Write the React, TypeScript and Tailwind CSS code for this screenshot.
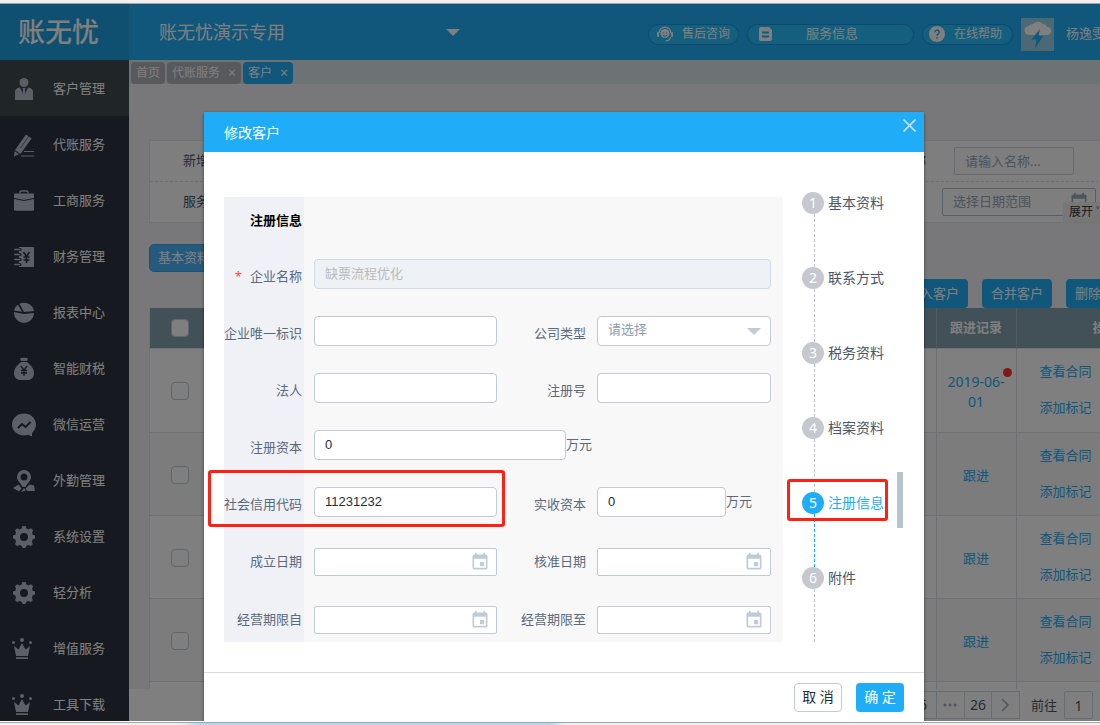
import { useState } from 'react'
import type { ReactNode } from 'react'
import clsx from 'clsx'
import { MdEvent } from 'react-icons/md'

const menuItems = [
  { label: '客户管理', icon: 'person' },
  { label: '代账服务', icon: 'pencil' },
  { label: '工商服务', icon: 'briefcase' },
  { label: '财务管理', icon: 'ledger' },
  { label: '报表中心', icon: 'pie' },
  { label: '智能财税', icon: 'moneybag' },
  { label: '微信运营', icon: 'trend' },
  { label: '外勤管理', icon: 'pin' },
  { label: '系统设置', icon: 'gear' },
  { label: '轻分析', icon: 'gear' },
  { label: '增值服务', icon: 'crown' },
  { label: '工具下载', icon: 'crown' },
]

const steps = ['基本资料', '联系方式', '税务资料', '档案资料', '注册信息', '附件']

const menuIcons: Record<string, ReactNode> = {
  person: (
    <>
      <circle cx="12" cy="5.5" r="4.5" />
      <path d="M3 23v-8c0-3 2-4 5-4.5L12 20l4-9.500c3 .5 5 1.500 5 4.500v8z" />
      <path d="M10.500 11h3l-.6 2 1.100 5-2 3-2-3 1.100-5z" />
    </>
  ),
  pencil: (
    <>
      <path d="M14 1.500 19.500 5.500 8.500 21 3 17z" />
      <path d="M2.600 18 7 21.200 2 23.500z" />
      <path d="M16.800 3.200 8.500 15" stroke="#2c3440" strokeWidth="0.600" />
      <path d="M12 18.500h10M9 23h13" stroke="currentColor" strokeWidth="1" />
    </>
  ),
  briefcase: (
    <>
      <path d="M8 4.500V3.200C8 2.200 8.600 2 9.500 2h5c.9 0 1.500.2 1.500 1.200v1.300" fill="none" stroke="currentColor" strokeWidth="1.300" />
      <path d="M2 5.500C2 5 2.400 4.600 3 4.600h18c.6 0 1 .4 1 .9V9l-10 2L2 9z" />
      <path d="M2 10l10 2 10-2v10.500c0 .8-.5 1.200-1.200 1.200H3.200c-.7 0-1.200-.4-1.200-1.200z" />
    </>
  ),
  ledger: (
    <>
      <path d="M7 2h14c.6 0 1 .4 1 1v18c0 .6-.4 1-1 1H7z" />
      <path d="M5 4.500h3M5 9.500h3M5 14.500h3M5 19.500h3" stroke="#2c3440" strokeWidth="3.200" strokeLinecap="round" />
      <path d="M2.800 4.500h4.700M2.800 9.500h4.700M2.800 14.500h4.700M2.800 19.500h4.700" stroke="currentColor" strokeWidth="1.500" strokeLinecap="round" />
      <path d="m11.500 7 3 4.500 3-4.500M14.500 11.500V18M11.500 12h6M11.500 15h6" fill="none" stroke="#2c3440" strokeWidth="1.600" />
    </>
  ),
  pie: (
    <>
      <path d="M12 11 7.500 2.800A10 10 0 0 1 22 10z" />
      <path d="M22 12a10 10 0 1 1-20 0v-1l10 2z" />
      <path d="M2 9.500C2.500 7 4 5 6 3.700l4 7z" />
    </>
  ),
  moneybag: (
    <>
      <path d="M8 1.500c2-1 6-1 8 0L15 4H9z" />
      <path d="M9 5h6c4 3 7 7 7 11 0 4.500-3 7-6 7H8c-3 0-6-2.500-6-7 0-4 3-8 7-11z" />
      <path d="m8.800 9 3.200 4 3.200-4M12 13v6M9 13.500h6M9 16h6" fill="none" stroke="#2c3440" strokeWidth="1.300" />
    </>
  ),
  trend: (
    <>
      <path d="M12 .500C18.600.500 24 5.300 24 11.500c0 3.600-1.700 6.500-4 8.500v3.500l-4-1.700C9 24 0 20 0 11.500 0 5.300 5.400.500 12 .500z" />
      <path d="m6 15 4-4 3.500 3L18.500 9" fill="none" stroke="#2c3440" strokeWidth="2" />
    </>
  ),
  pin: (
    <>
      <path fillRule="evenodd" d="M12 1a7 7 0 0 1 7 7c0 4-4 6.500-5.500 10h-3C9 14.500 5 12 5 8a7 7 0 0 1 7-7zm0 3.500a3.500 3.500 0 1 0 0 7 3.500 3.500 0 0 0 0-7z" />
      <path d="m6.500 15.500 3 4-2.500 3L1 19zM17.500 15.500l4.500 1 1 5.500h-8l-1.500-2.500zM12 19l2 2.500-5 1.500z" />
    </>
  ),
  gear: (
    <path
      fillRule="evenodd"
      d="m10.500 1h3l1 2.600 2 .8 2.600-1.200 2 2-1.100 2.700.8 1.900L23 10.500v3l-2.400 1-.8 1.900 1.100 2.600-2 2-2.600-1.100-2 .8-.8 2.300h-3l-1-2.300-2-.8L5 21l-2-2 1.100-2.600-.8-1.900L1 13.500v-3l2.300-.8.8-1.900L3 5.200l2-2 2.500 1.200 2-.8zM12 8a4 4 0 1 0 0 8 4 4 0 0 0 0-8z"
    />
  ),
  crown: (
    <>
      <circle cx="10" cy="3" r="2" />
      <circle cx="1.500" cy="5.500" r="1.500" />
      <circle cx="18.500" cy="5.500" r="1.500" />
      <path d="m2 9 4.500 3.500L10 6l3.500 6.500L18 9l-2 10H4zM4 20.200h12V22H4z" />
    </>
  ),
}

function Sidebar() {
  return (
    <nav className="w-[129px] shrink-0 overflow-hidden bg-[#2c3440]">
      {menuItems.map((item, i) => (
        <a
          key={item.label}
          href="#"
          className={clsx('flex h-14 items-center gap-[17px] pt-0.5 pl-3 text-[13px] text-white', i === 0 && 'bg-[#404a4e]')}
        >
          <svg viewBox="0 0 24 24" fill="currentColor" className="size-6 shrink-0 text-[#b8bfca]">
            {menuIcons[item.icon]}
          </svg>
          {item.label}
        </a>
      ))}
    </nav>
  )
}

function TopBar() {
  return (
    <header className="flex h-14 shrink-0 items-center overflow-hidden bg-[#22aef6] whitespace-nowrap text-white">
      <div className="flex h-full w-[129px] shrink-0 items-center bg-[#1f9edf] pl-[18px] text-[27px] font-medium">账无忧</div>
      <button className="flex w-[331px] shrink-0 items-center justify-between pl-[30px] text-lg">
        账无忧演示专用
        <svg viewBox="0 0 14 7" fill="currentColor" className="h-[7px] w-3.5">
          <path d="M0 0h14L7 7z" />
        </svg>
      </button>
      <div className="ml-auto flex w-[452px] shrink-0 items-center gap-2 pt-1">
        <button className="flex h-[21px] w-[91px] shrink-0 items-center justify-between rounded-full border border-[#1a90dc] bg-[#29bffd] px-2 text-xs">
          <svg viewBox="0 0 16 16" fill="currentColor" className="size-4">
            <path d="M2.200 7a5.800 5.800 0 0 1 11.600 0" fill="none" stroke="currentColor" strokeWidth="1.200" />
            <rect x="0" y="6" width="2" height="5" rx="1" />
            <rect x="14" y="6" width="2" height="5" rx="1" />
            <circle cx="8" cy="7.500" r="4.500" />
            <path d="M13.500 11c0 2-2 4-5 4" fill="none" stroke="currentColor" strokeWidth="1.200" />
            <path d="M6.300 6.500v1M9.700 6.500v1M6 9.300c1 1.200 3 1.200 4 0" fill="none" stroke="#22aef6" strokeWidth="1" />
          </svg>
          售后咨询
        </button>
        <button className="flex h-[21px] w-[167px] shrink-0 items-center rounded-full border border-[#1a90dc] bg-[#29bffd] pl-[11px] text-[13px]">
          <svg viewBox="0 0 13 14" className="h-3.5 w-[13px]">
            <path d="M2 0h8l3 3v9a2 2 0 0 1-2 2H2a2 2 0 0 1-2-2V2a2 2 0 0 1 2-2z" fill="currentColor" />
            <path d="M3 5.500h7M3 9.500h7" stroke="#22aef6" strokeWidth="1.800" />
          </svg>
          <span className="pl-[34px]">服务信息</span>
        </button>
        <button className="flex h-[21px] w-[91px] shrink-0 items-center justify-between rounded-full border border-[#1a90dc] bg-[#29bffd] pr-2.5 pl-1.5 text-xs">
          <svg viewBox="0 0 16 16" className="size-4">
            <circle cx="8" cy="8" r="8" fill="currentColor" />
            <path d="M5.800 6.300a2.200 2.200 0 1 1 3.300 1.900c-.8.4-1.100.7-1.100 1.500M8 11v1.500" fill="none" stroke="#22aef6" strokeWidth="1.500" />
          </svg>
          在线帮助
        </button>
        <svg viewBox="0 0 33 33" className="size-[33px] shrink-0">
          <rect width="33" height="33" fill="#97d3ea" />
          <path d="M8 17a4.500 4.500 0 0 1 0-9 4 4 0 0 1 4-2 6.500 6.500 0 0 1 10 0 4.500 4.500 0 0 1 4 3 4 4 0 0 1 0 8z" fill="#fff" />
          <path d="m19 11-8.500 10.500h5L14 31l8-13h-4.500z" fill="#22aef6" />
        </svg>
        <span className="pl-1 text-[13px]">杨逸雯</span>
      </div>
    </header>
  )
}

function TabBar() {
  return (
    <div className="flex h-6 shrink-0 items-end gap-0.5 bg-[#dae4ea] pl-0.5 text-xs text-white">
      <button className="h-[22px] rounded-sm bg-[#b0b2b9] px-[5px]">首页</button>
      <button className="flex h-[22px] items-center rounded-sm bg-[#b0b2b9] px-[5px]">
        代账服务 <span className="pl-2 text-sm">×</span>
      </button>
      <button className="flex h-[22px] items-center rounded-sm bg-[#22aef6] px-[5px]">
        客户 <span className="pl-2 text-sm">×</span>
      </button>
    </div>
  )
}

function Filters() {
  return (
    <div className="relative border border-[#e2e3e8] bg-[#fcfcfc] text-[13px] text-[#48576a]">
      <div className="flex h-[41px] items-center justify-between border-b border-dashed border-[#dcdde2] pr-[120px] pl-[33px]">
        <span>新增时间</span>
        <label className="flex items-center gap-7">
          客户名称
          <input placeholder="请输入名称..." className="h-7 w-[120px] rounded-xs border border-[#ced6e0] px-2.5 placeholder:text-[#97a8be]" />
        </label>
      </div>
      <div className="flex h-10 items-center justify-between pr-[98px] pl-[33px]">
        <span>服务状态</span>
        <div className="flex h-7 w-[154px] items-center justify-between rounded-xs border border-[#aebccb] pr-1.5">
          <input placeholder="选择日期范围" aria-label="选择日期范围" className="w-[110px] pl-2.5 placeholder:text-[#97a8be]" />
          <MdEvent className="size-5 shrink-0 text-[#97a8be]" />
        </div>
      </div>
      <button className="absolute right-[71px] bottom-0 h-5 w-[60px] bg-[#eeeeee] pl-1.5 text-left text-xs text-[#333]">展开 ˅</button>
    </div>
  )
}

function RowCheckbox({ label }: { label: string }) {
  return (
    <input
      type="checkbox"
      aria-label={label}
      className="ml-[6px] block size-[18px] appearance-none rounded border border-[#bfcbd9] bg-white"
    />
  )
}

function CustomerTable() {
  const rows = ['2019-06-01', '跟进', '跟进', '跟进', '跟进']

  return (
    <table className="w-full table-fixed border-collapse border-l border-[#e0e2e8] bg-white text-[13px]">
      <colgroup>
        <col className="w-[55px]" />
        <col />
        <col className="w-20" />
        <col className="w-[179px]" />
      </colgroup>
      <thead>
        <tr className="h-10 bg-[#84a2b0] text-white">
          <th className="border-r border-dashed border-[#6f8794] pl-[15px]"><RowCheckbox label="全选" /></th>
          <th className="border-r border-[#a3b9c4]" />
          <th className="border-r border-[#a3b9c4]">跟进记录</th>
          <th>操作</th>
        </tr>
      </thead>
      <tbody>
        {rows.map((record, i) => (
          <tr key={i} className={clsx('border-y border-[#dde1e8]', i === 0 ? 'h-[84px]' : 'h-[83px]', i % 2 === 1 && 'bg-[#f9f9fa]')}>
            <td className="pt-0.5 pl-[15px]"><RowCheckbox label={`选择第${i + 1}行`} /></td>
            <td className="border-r border-[#dde1e8]" />
            <td className="relative border-r border-[#dde1e8] px-2.5 pt-1 text-center">
              <a href="#" className={clsx('text-[#22aef6]', i === 0 && 'text-sm')}>{record}</a>
              {i === 0 && <span className="absolute top-[19px] right-1 size-[9px] rounded-full bg-[#ff3333]" />}
            </td>
            <td className="pb-0.5 pl-[23px]">
              <a href="#" className="block h-9 leading-9 text-[#22aef6]">查看合同</a>
              <a href="#" className="block h-9 leading-9 text-[#22aef6]">添加标记</a>
            </td>
          </tr>
        ))}
      </tbody>
    </table>
  )
}

function Pager() {
  return (
    <div className="flex h-8 shrink-0 bg-white text-[#48576a]">
      <div className="flex w-[1066px] shrink-0 items-center justify-end pr-[102px] text-sm">
        <button className="h-7 w-7 border border-[#d1dbe5]">6</button>
        <button className="h-7 w-7 border-y border-r border-[#d1dbe5] text-[#97a8be]">
          <svg viewBox="0 0 14 4" fill="currentColor" aria-label="更多" className="mx-auto h-1 w-3.5">
            <circle cx="2" cy="2" r="1.500" />
            <circle cx="7" cy="2" r="1.500" />
            <circle cx="12" cy="2" r="1.500" />
          </svg>
        </button>
        <button className="h-7 w-[27px] border-y border-r border-[#d1dbe5]">26</button>
        <button aria-label="下一页" className="flex h-7 w-7 items-center justify-center border-y border-r border-[#d1dbe5] text-[#97a8be]">
          <svg viewBox="0 0 8 14" fill="none" stroke="currentColor" strokeWidth="1.500" className="h-3.5 w-2">
            <path d="m1 1 6 6-6 6" />
          </svg>
        </button>
        <label className="flex items-center gap-[7px] pl-[11px] text-[13px]">
          前往
          <input defaultValue="1" className="h-7 w-[29px] rounded-xs border border-[#d1dbe5] text-center text-sm" />
        </label>
      </div>
    </div>
  )
}

function CustomerPage() {
  return (
    <main className="flex min-w-0 flex-1 flex-col overflow-hidden">
      <TabBar />
      <div className="min-h-0 flex-1 overflow-hidden bg-[#f0f0f5] pt-14 pl-5">
        <div className="min-w-[1046px]">
          <Filters />
          <button className="mt-[21px] block h-7 rounded-[5px] border border-[#3ba4ef] bg-[#4db5fb] px-2 text-[13px] text-white">基本资料</button>
          <div className="mt-[7px] flex justify-end gap-3.5 pr-[59px] text-[13px] text-white">
            <button className="h-[29px] w-[70px] rounded bg-[#22aef6]">导入客户</button>
            <button className="h-[29px] w-[70px] rounded bg-[#22aef6]">合并客户</button>
            <button className="h-[29px] w-[70px] rounded bg-[#22aef6]">删除客户</button>
          </div>
          <CustomerTable />
        </div>
      </div>
      <Pager />
    </main>
  )
}

const inputStyle = 'h-[30px] rounded border border-[#bfcbd9] bg-white px-2.5 pb-px font-[Liberation_Sans,Noto_Sans_CJK_SC,sans-serif] text-[13px] text-[#1f2d3d]'

function FirstLabel({ id, children }: { id: string; children: ReactNode }) {
  return (
    <label htmlFor={id} className="w-20 shrink-0 pr-0.5 text-right whitespace-nowrap">
      {children}
    </label>
  )
}

function SecondLabel({ id, children }: { id: string; children: ReactNode }) {
  return (
    <label htmlFor={id} className="w-[100px] shrink-0 pr-[11px] text-right">
      {children}
    </label>
  )
}

function DateInput({ id, className }: { id: string; className: string }) {
  return (
    <div className={clsx('flex h-7 items-center rounded-xs border border-[#bfcbd9] bg-white pr-1.5', className)}>
      <input id={id} className="min-w-0 flex-1 px-2.5" />
      <MdEvent className="size-5 shrink-0 text-[#bfcbd9]" />
    </div>
  )
}

function RegistrationForm() {
  return (
    <form className="mt-[5px] w-[559px] shrink-0 bg-[linear-gradient(to_right,#eff1f6_80px,#f8f8f8_80px)] text-[13px] text-[#5a6a80]">
      <h3 className="h-[51px] w-20 pt-3.5 pr-0.5 text-right font-bold text-black">注册信息</h3>
      <div className="flex h-[57px] items-center">
        <FirstLabel id="name"><span className="pr-2 text-[#ff4949]">*</span>企业名称</FirstLabel>
        <div className="pb-1.5 pl-2.5">
          <input id="name" disabled defaultValue="缺票流程优化" className="h-[30px] w-[457px] rounded border border-[#d1dbe5] bg-[#eef1f6] px-2.5 pb-0.5 text-[#bbb]" />
        </div>
      </div>
      <div className="flex h-[57px] items-center">
        <FirstLabel id="uid">企业唯一标识</FirstLabel>
        <div className="pb-1.5 pl-2.5"><input id="uid" className={clsx(inputStyle, 'w-[183px]')} /></div>
        <SecondLabel id="type">公司类型</SecondLabel>
        <div className="relative pb-1.5">
          <select id="type" className="h-[30px] w-[174px] appearance-none rounded border border-[#bfcbd9] bg-white px-2.5 pb-0.5 text-[#8c9db3]">
            <option>请选择</option>
          </select>
          <svg viewBox="0 0 14 7" fill="#bfcbd9" className="pointer-events-none absolute top-3 right-2.5 h-[7px] w-3.5">
            <path d="M0 0h14L7 7z" />
          </svg>
        </div>
      </div>
      <div className="flex h-[57px] items-center">
        <FirstLabel id="legal">法人</FirstLabel>
        <div className="pb-1.5 pl-2.5"><input id="legal" className={clsx(inputStyle, 'w-[183px]')} /></div>
        <SecondLabel id="regno">注册号</SecondLabel>
        <div className="pb-1.5"><input id="regno" className={clsx(inputStyle, 'w-[174px]')} /></div>
      </div>
      <div className="flex h-[57px] items-center">
        <FirstLabel id="capital">注册资本</FirstLabel>
        <div className="flex items-center pb-1.5 pl-2.5">
          <input id="capital" defaultValue="0" className={clsx(inputStyle, 'w-[252px]')} />万元
        </div>
      </div>
      <div className="relative flex h-[57px] items-center">
        <FirstLabel id="credit">社会信用代码</FirstLabel>
        <div className="pb-1.5 pl-2.5"><input id="credit" defaultValue="11231232" className={clsx(inputStyle, 'w-[183px]')} /></div>
        <SecondLabel id="paid">实收资本</SecondLabel>
        <div className="flex items-center pb-1.5">
          <input id="paid" defaultValue="0" className={clsx(inputStyle, 'w-[129px]')} />万元
        </div>
        <span className="pointer-events-none absolute -top-1.5 -left-4 h-[57px] w-[297px] rounded-[3px] border-3 border-[#ff2113]" />
      </div>
      <div className="flex h-[57px] items-center">
        <FirstLabel id="founded">成立日期</FirstLabel>
        <DateInput id="founded" className="ml-2.5 w-[183px]" />
        <SecondLabel id="approved">核准日期</SecondLabel>
        <DateInput id="approved" className="w-[174px]" />
      </div>
      <div className="flex h-[52px] items-center pt-2">
        <FirstLabel id="from">经营期限自</FirstLabel>
        <DateInput id="from" className="ml-2.5 w-[183px]" />
        <SecondLabel id="to">经营期限至</SecondLabel>
        <DateInput id="to" className="w-[174px]" />
      </div>
    </form>
  )
}

function EditDialog() {
  const [current, setCurrent] = useState(4)

  return (
    <div role="dialog" aria-label="修改客户" className="flex h-full w-[720px] flex-col bg-white shadow-[0_1px_3px_rgba(0,0,0,0.5)]">
      <div className="flex h-10 shrink-0 items-center justify-between bg-[#20adf7] pr-2 pl-5 text-sm text-white">
        <h2 className="pt-0.5">修改客户</h2>
        <button aria-label="关闭" className="self-start pt-[7px] text-[#c9dcec]">
          <svg viewBox="0 0 13 13" fill="none" stroke="currentColor" strokeWidth="1.700" className="size-[13px]">
            <path d="m.500.500 12 12M12.500.500l-12 12" />
          </svg>
        </button>
      </div>
      <div className="relative flex min-h-0 flex-1 items-start pt-10 pl-5">
        <RegistrationForm />
        <ol className="pl-[19px] text-sm text-[#48576a]">
          {steps.map((step, i) => (
            <li key={step} className="relative h-[75px]">
              <button
                onClick={() => setCurrent(i)}
                className={clsx('flex h-[22px] items-center gap-1 whitespace-nowrap', i === current && 'text-[#20adf7]')}
              >
                <span className={clsx('flex size-[22px] items-center justify-center rounded-full text-white', i === current ? 'bg-[#20adf7]' : 'bg-[#c5c8ce]')}>
                  {i + 1}
                </span>
                {step}
              </button>
              <div className={clsx('ml-3 h-[53px] border-l border-dashed', i === current ? 'border-[#20adf7]' : 'border-[#c5c8ce]')} />
              {i === 4 && <span className="pointer-events-none absolute -top-[13px] -left-[15px] h-[42px] w-[101px] rounded-[3px] border-3 border-[#ff2113]" />}
            </li>
          ))}
        </ol>
        <span className="absolute top-[320px] right-[21px] h-14 w-1.5 bg-[#b8c1cf]" />
      </div>
      <div className="flex h-[49px] shrink-0 items-center justify-end gap-3.5 border-t border-[#d9dbdf] pr-5 text-sm">
        <button className="h-[29px] w-12 rounded border border-[#bfcbd9] text-[#1f2d3d]">取 消</button>
        <button className="h-[29px] w-12 rounded bg-[#20adf7] text-white">确 定</button>
      </div>
    </div>
  )
}

export default function App() {
  return (
    <div className="flex h-screen flex-col overflow-hidden bg-[#f0f0f0] font-['Noto_Sans','Noto_Sans_CJK_SC',sans-serif]">
      <div className="h-1 shrink-0 border-b border-[#a5a5a5]" />
      <div className="relative flex min-h-0 flex-1 flex-col overflow-hidden">
        <TopBar />
        <div className="flex min-h-0 flex-1">
          <Sidebar />
          <CustomerPage />
        </div>
        <div className="absolute inset-0 flex justify-center bg-black/50 pt-[108px] pl-7">
          <EditDialog />
        </div>
      </div>
      <div className="h-1 shrink-0 border-t border-white">
        <div className="h-full border-t border-[#a5a5a5] bg-[linear-gradient(to_right,#f0f0f0_180px,#b5d6f2_200px,#b5d6f2_550px,#f0f0f0_565px)]" />
      </div>
    </div>
  )
}
